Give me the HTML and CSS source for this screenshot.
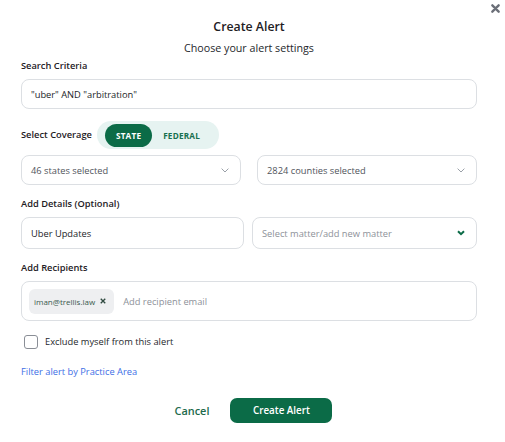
FILE: index.html
```html
<!DOCTYPE html>
<html>
<head>
<meta charset="utf-8">
<link rel="stylesheet" href="styles.css">
</head>
<body>
<div class="modal">
  <button class="close" aria-label="Close">
    <svg width="9" height="9" viewBox="0 0 10 10"><path d="M1.5 1.5 L8.5 8.5 M8.5 1.5 L1.5 8.5" stroke="#6b6f78" stroke-width="2.6" stroke-linecap="round"/></svg>
  </button>
  <h1 class="title">Create Alert</h1>
  <p class="subtitle">Choose your alert settings</p>

  <div class="label">Search Criteria</div>
  <div class="field field-search">"uber" AND "arbitration"</div>

  <div class="coverage">
    <div class="label">Select Coverage</div>
    <div class="toggle">
      <span class="toggle-opt active">STATE</span>
      <span class="toggle-opt">FEDERAL</span>
    </div>
  </div>

  <div class="row row-wide">
    <div class="field field-select">
      <span class="muted-dark">46 states selected</span>
      <svg class="chev" width="8" height="5" viewBox="0 0 8 5"><path d="M0.6 0.6 L4 4 L7.4 0.6" fill="none" stroke="#9aa0a8" stroke-width="1"/></svg>
    </div>
    <div class="field field-select">
      <span class="muted-dark">2824 counties selected</span>
      <svg class="chev" width="8" height="5" viewBox="0 0 8 5"><path d="M0.6 0.6 L4 4 L7.4 0.6" fill="none" stroke="#9aa0a8" stroke-width="1"/></svg>
    </div>
  </div>

  <div class="label label-gap">Add Details (Optional)</div>
  <div class="row row-narrow">
    <div class="field field-detail">Uber Updates</div>
    <div class="field field-detail field-select">
      <span class="placeholder">Select matter/add new matter</span>
      <svg class="chev" width="8" height="6" viewBox="0 0 8 6"><path d="M1 1.2 L4 4.2 L7 1.2" fill="none" stroke="#0b6b47" stroke-width="2"/></svg>
    </div>
  </div>

  <div class="label label-gap">Add Recipients</div>
  <div class="field field-recipients">
    <span class="chip">iman@trellis.law
      <svg width="6" height="6" viewBox="0 0 8 8"><path d="M1 1 L7 7 M7 1 L1 7" stroke="#2f4a40" stroke-width="1.8"/></svg>
    </span>
    <span class="placeholder">Add recipient email</span>
  </div>

  <label class="check">
    <span class="box"></span>
    <span>Exclude myself from this alert</span>
  </label>

  <a class="link" href="#">Filter alert by Practice Area</a>

  <div class="actions">
    <button class="btn-cancel">Cancel</button>
    <button class="btn-primary">Create Alert</button>
  </div>
</div>
</body>
</html>
```
FILE: styles.css
```css
* { box-sizing: border-box; }
html, body {
  margin: 0;
  padding: 0;
  background: #ffffff;
}
body {
  font-family: "Open Sans", "Noto Sans", sans-serif;
  color: #222428;
  width: 505px;
  height: 442px;
  overflow: hidden;
}
.modal {
  position: relative;
  padding: 17px 28px 0 21px;
}
.close {
  position: absolute;
  top: 3px;
  right: 5px;
  border: 0;
  background: none;
  padding: 0;
  width: 10px;
  height: 10px;
  display: flex;
  align-items: center;
  justify-content: center;
}
.title {
  margin: 0;
  font-size: 12.3px;
  line-height: 20px;
  font-weight: 600;
  text-align: center;
  color: #1e2024;
}
.subtitle {
  margin: 1px 0 0;
  font-size: 10.7px;
  line-height: 20px;
  text-align: center;
  color: #25272b;
}
.label {
  font-size: 9.3px;
  line-height: 16px;
  font-weight: 600;
  color: #1e2024;
}
.label-gap { margin-top: 11px; }
.field {
  border: 1px solid #dcdfe3;
  border-radius: 8px;
  font-size: 9.3px;
  display: flex;
  align-items: center;
  padding: 0 9px;
}
.field-search {
  margin-top: 5px;
  height: 30px;
  color: #222428;
}
.coverage {
  margin-top: 12px;
  display: flex;
  align-items: center;
  gap: 5px;
}
.toggle {
  display: flex;
  align-items: center;
  height: 28px;
  padding: 0 8px;
  background: #e6f3f1;
  border-radius: 14px;
}
.toggle-opt {
  height: 23px;
  padding: 0 11px;
  display: flex;
  align-items: center;
  border-radius: 12px;
  font-size: 8.2px;
  font-weight: 700;
  letter-spacing: 0.2px;
  color: #17704f;
}
.toggle-opt.active {
  background: #0b6b47;
  color: #ffffff;
}
.row {
  display: flex;
}
.row > .field { flex: 1; }
.row-wide { margin-top: 6px; gap: 16px; }
.row-wide .field { height: 30px; }
.row-narrow { margin-top: 5px; gap: 8px; }
.field-detail { height: 32px; color: #222428; }
.field-select {
  justify-content: space-between;
  padding-right: 11px;
}
.muted-dark { color: #50545b; }
.placeholder { color: #8d9199; }
.chev { flex: none; }
.field-recipients {
  margin-top: 5px;
  height: 40px;
  padding: 0 7px;
  gap: 9px;
}
.chip {
  display: flex;
  align-items: center;
  gap: 5px;
  height: 25px;
  padding: 0 8px 0 5px;
  background: #eeeff1;
  border-radius: 6px;
  font-size: 8px;
  color: #3a5a4e;
}
.check {
  margin-top: 14px;
  display: flex;
  align-items: center;
  gap: 7px;
  padding-left: 3px;
  font-size: 9.3px;
  line-height: 14px;
  color: #25272b;
}
.box {
  width: 14px;
  height: 14px;
  border: 1.3px solid #8a8e96;
  border-radius: 3px;
  background: #fff;
}
.link {
  display: block;
  margin-top: 15px;
  font-size: 9.3px;
  line-height: 16px;
  color: #3d6ee6;
  text-decoration: none;
}
.actions {
  margin-top: 18px;
  display: flex;
  justify-content: center;
  align-items: center;
  gap: 21px;
  padding-left: 9px;
}
.btn-cancel {
  border: 0;
  background: none;
  font-family: inherit;
  font-size: 10.9px;
  font-weight: 600;
  color: #1d6a4c;
  padding: 0;
}
.btn-primary {
  border: 0;
  font-family: inherit;
  width: 102px;
  height: 25px;
  border-radius: 7px;
  background: #0b6b47;
  color: #ffffff;
  font-size: 9.8px;
  font-weight: 600;
  padding: 0;
}
```
